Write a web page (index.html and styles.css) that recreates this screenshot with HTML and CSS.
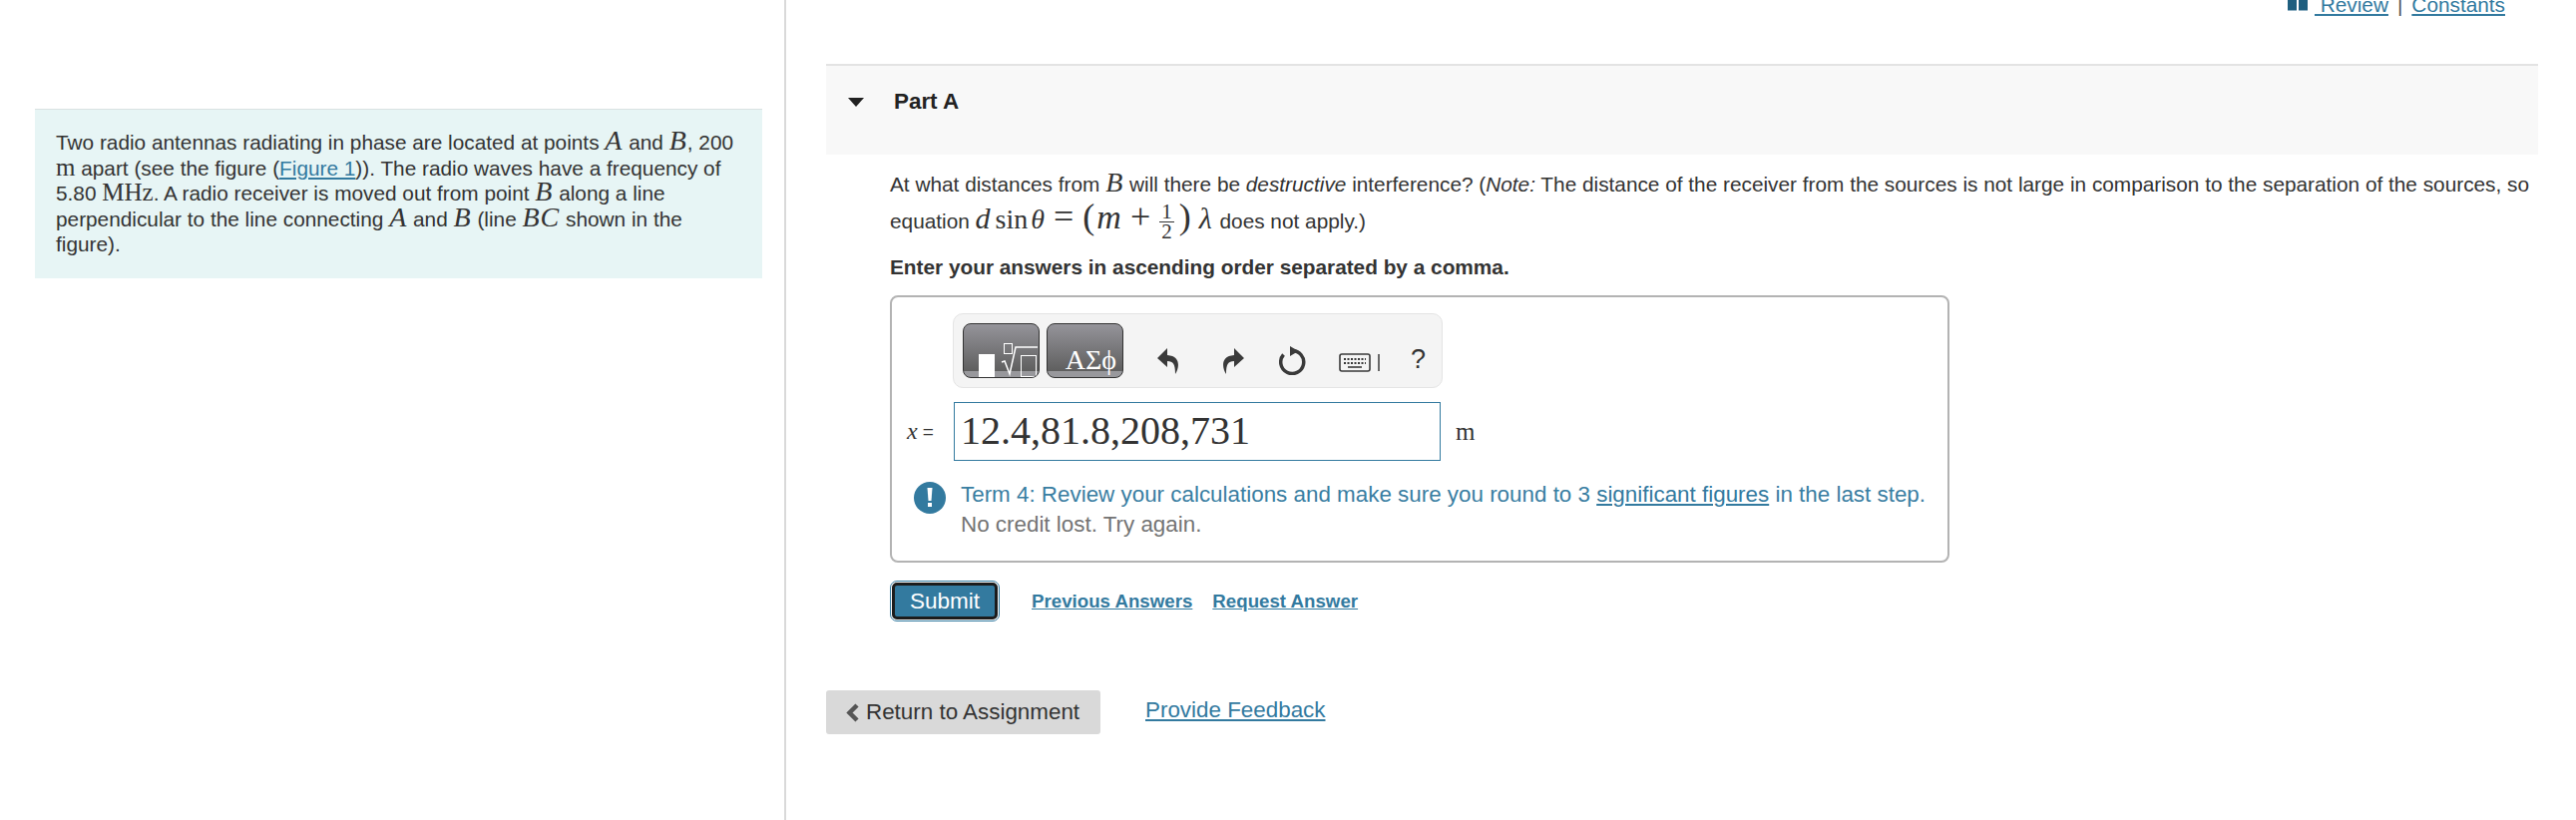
FILE: index.html
```html
<!DOCTYPE html>
<html lang="en">
<head>
  <meta charset="UTF-8">
  <title>Part A</title>
  <link rel="stylesheet" href="styles.css">
</head>
<body>
  <div class="page">
    <div class="left">
      <div class="intro">
        Two radio antennas radiating in phase are located at points <i class="math big">A</i> and <i class="math big">B</i>, 200 <span class="math unit-m">m</span> apart (see the figure (<a href="#">Figure 1</a>)). The radio waves have a frequency of 5.80 <span class="math unit-m">MHz</span>. A radio receiver is moved out from point <i class="math big">B</i> along a line perpendicular to the line connecting <i class="math big">A</i> and <i class="math big">B</i> (line <i class="math big">BC</i> shown in the figure).
      </div>
    </div>

    <div class="right">
      <div class="toplinks">
        <svg class="book" width="20" height="11" viewBox="0 0 20 11"><path d="M0 0h9v10H0zM11 0h9v10h-9z" fill="#1f5f7f"/><path d="M0 10h9v1H0zM11 10h9v1h-9z" fill="#8fb0c2"/></svg>
        <a href="#">&nbsp;Review</a>
        <span class="sep">|</span>
        <a href="#">Constants</a>
      </div>

      <div class="part-head">
        <svg class="caret" width="16" height="9" viewBox="0 0 16 9"><path d="M0 0h16L8 9z" fill="#222"/></svg>
        <span>Part A</span>
      </div>

      <div class="part-body">
        <p class="question">At what distances from <i class="math big">B</i> will there be <i>destructive</i> interference? (<i>Note:</i> The distance of the receiver from the sources is not large in comparison to the separation of the sources, so equation <span class="math eq"><i class="eq-d">d</i><span class="eq-sin">sin</span><i>θ</i><span class="eq-op">=</span><span class="eq-paren">(</span><i class="eq-m">m</i><span class="eq-op">+</span><span class="frac"><span>1</span><span>2</span></span><span class="eq-paren">)</span><i class="eq-l">λ</i></span> does not apply.)</p>
        <p class="instr">Enter your answers in ascending order separated by a comma.</p>

        <div class="answer-box">
          <div class="toolbar">
            <div class="tool-btn">
              <svg width="75" height="53" viewBox="0 0 75 53">
                <rect x="15" y="30" width="16" height="23" fill="#fff"/>
                <rect x="40.500" y="19.500" width="8" height="10" fill="none" stroke="#fff"/>
                <path d="M38 38l3-1 5 13 6-27h22" fill="none" stroke="#fff" stroke-width="1.500"/>
                <rect x="57.500" y="31.500" width="15" height="21" fill="none" stroke="#fff"/>
              </svg>
            </div>
            <div class="tool-btn greek">ΑΣϕ</div>
            <svg class="ic-undo" width="22" height="26" viewBox="0 0 22 26"><path d="M10 0L0 10l10 9v-6c6 0 8 3 8 13 4-6 6-18-8-19z" fill="#3a3a3a"/></svg>
            <svg class="ic-redo" width="22" height="26" viewBox="0 0 22 26"><path d="M12 0l10 10-10 9v-6c-6 0-8 3-8 13C0 20-2 8 12 7z" fill="#3a3a3a"/></svg>
            <svg class="ic-reload" width="27" height="29" viewBox="0 0 27 29"><path d="M4.500 8.500A11.500 11.500 0 1 0 13 4.500" fill="none" stroke="#3a3a3a" stroke-width="3.500"/><path d="M11 0l8.500 5-8.500 5z" fill="#3a3a3a"/></svg>
            <svg class="ic-kbd" width="42" height="19" viewBox="0 0 42 19">
              <rect x="1" y="1" width="30" height="17" rx="2" fill="#f4f4f4" stroke="#3a3a3a" stroke-width="1.600"/>
              <path d="M5 6h22M5 10h22" stroke="#3a3a3a" stroke-width="2" stroke-dasharray="2 1.500"/>
              <path d="M9 14h14" stroke="#3a3a3a" stroke-width="1.600"/>
              <path d="M40 1v17" stroke="#3a3a3a" stroke-width="1.500"/>
            </svg>
            <span class="help">?</span>
          </div>

          <div class="input-row">
            <span class="var"><i>x</i><span class="var-eq">=</span></span>
            <div class="answer-input">12.4,81.8,208,731</div>
            <span class="unit">m</span>
          </div>

          <div class="feedback">
            <svg class="alert" width="32" height="32" viewBox="0 0 32 32">
              <circle cx="16" cy="16" r="16" fill="#337a9f"/>
              <path d="M13.500 6h5l-1 13h-3z" fill="#fff"/>
              <rect x="14" y="21" width="4" height="4" fill="#fff"/>
            </svg>
            <div class="feedback-text">
              <div class="hint">Term 4: Review your calculations and make sure you round to 3 <a href="#">significant figures</a> in the last step.</div>
              <div class="credit">No credit lost. Try again.</div>
            </div>
          </div>
        </div>

        <div class="actions">
          <button class="submit">Submit</button>
          <a class="action-link" href="#">Previous Answers</a>
          <a class="action-link" href="#">Request Answer</a>
        </div>
      </div>

      <div class="footer-row">
        <button class="return">
          <svg width="13" height="19" viewBox="0 0 13 19"><path d="M11 2L3.500 9.500 11 17" fill="none" stroke="#555" stroke-width="4.500"/></svg>
          Return to Assignment
        </button>
        <a class="feedback-link" href="#">Provide Feedback</a>
      </div>
    </div>
  </div>
</body>
</html>
```

FILE: styles.css
```css
html, body {
  margin: 0;
  height: 100%;
  overflow: hidden;
  background: #fff;
}

body {
  font-family: "Liberation Sans", Arial, sans-serif;
  font-size: 20.800px;
  color: #333;
}

a {
  color: #337a9f;
}

.page {
  display: flex;
  height: 822px;
}

.left {
  width: 729px;
  flex: none;
  padding: 109px 22px 0 35px;
  border-right: 2px solid #d9d9d9;
}

.intro {
  box-sizing: border-box;
  height: 170px;
  padding: 21px;
  background: #e7f5f5;
  box-shadow: inset 0 1px 0 #d9e2e2;
  line-height: 25.600px;
}

.math {
  font-family: "Liberation Serif", "Times New Roman", serif;
}

.math.big {
  font-size: 28px;
  line-height: 0;
  letter-spacing: 1px;
}

.unit-m {
  font-size: 25px;
  line-height: 0;
}

.right {
  flex: 1;
  min-width: 0;
  padding: 0 38px 0 40px;
}

.toplinks {
  display: flex;
  justify-content: flex-end;
  align-items: flex-end;
  gap: 9px;
  height: 16px;
  padding-right: 33px;
  overflow: hidden;
  line-height: 22px;
}

.book {
  margin: 0 -2px 5px 0;
}

.sep {
  color: #555;
}

.part-head {
  display: flex;
  align-items: center;
  margin-top: 48px;
  height: 91px;
  box-sizing: border-box;
  padding: 0 0 17px 22px;
  background: #f8f8f8;
  border-top: 2px solid #e3e3e3;
  font-size: 22.400px;
  font-weight: bold;
  color: #222;
}

.caret {
  margin-right: 30px;
}

.part-body {
  padding-left: 64px;
}

.question {
  margin: 11px 0 0;
  height: 74px;
  line-height: 37px;
}

.eq {
  font-size: 28px;
  line-height: 0;
  white-space: nowrap;
}

.eq-d {
  font-size: 30px;
}

.eq-sin {
  margin: 0 3px 0 5px;
}

.eq-op {
  margin: 0 9px;
  font-size: 36px;
}

.eq-paren {
  font-size: 36px;
  font-weight: normal;
}

.eq-m {
  margin-left: 2px;
  font-size: 34px;
}

.eq-l {
  margin: 0 2px 0 8px;
  font-size: 30px;
}

.frac {
  display: inline-flex;
  flex-direction: column;
  align-items: center;
  vertical-align: middle;
  margin-right: 5px;
  font-size: 21px;
  line-height: 19px;
}

.frac span:first-child {
  padding: 0 2px;
  border-bottom: 1px solid #333;
}

.instr {
  margin: 15px 0 0;
  font-weight: bold;
  line-height: 26px;
}

.answer-box {
  width: 1062px;
  height: 268px;
  margin-top: 15px;
  box-sizing: border-box;
  padding: 16px 0 0 15px;
  border: 2px solid #b3b3b3;
  border-radius: 8px;
}

.toolbar {
  display: flex;
  align-items: center;
  width: 491px;
  height: 75px;
  margin-left: 46px;
  box-sizing: border-box;
  padding-left: 9px;
  background: #f4f4f4;
  border: 1px solid #e4e4e4;
  border-radius: 10px;
}

.tool-btn {
  width: 77px;
  height: 55px;
  margin-right: 7px;
  box-sizing: border-box;
  border: 1px solid #333;
  border-radius: 8px;
  background: linear-gradient(#95949a, #5f5f5f 88%, #98989c 88%);
  color: #fff;
  display: flex;
  overflow: hidden;
}

.greek {
  font-family: "Liberation Serif", serif;
  font-size: 28px;
  align-items: flex-end;
  justify-content: flex-end;
  line-height: 34px;
  padding: 0 6px 0 0;
}

.ic-undo {
  margin: 20px 43px 0 27px;
}

.ic-redo {
  margin: 20px 35px 0 0;
}

.ic-reload {
  margin: 20px 33px 0 0;
}

.ic-kbd {
  margin: 24px 30px 0 0;
}

.help {
  margin-top: 18px;
  font-size: 27px;
}

.input-row {
  display: flex;
  align-items: center;
  margin-top: 14px;
}

.var {
  display: flex;
  align-items: center;
  width: 47px;
  font-size: 19px;
  flex: none;
}

.var i {
  font-family: "Liberation Serif", serif;
  font-size: 24px;
}

.var-eq {
  margin-left: 5px;
}

.answer-input {
  width: 488px;
  height: 59px;
  box-sizing: border-box;
  border: 1px solid #337a9f;
  padding-left: 6px;
  font-family: "Liberation Serif", serif;
  font-size: 40px;
  line-height: 56px;
}

.unit {
  margin-left: 15px;
  font-family: "Liberation Serif", serif;
  font-size: 25px;
}

.feedback {
  display: flex;
  align-items: flex-start;
  gap: 15px;
  margin-left: 7px;
  padding-top: 19px;
}

.alert {
  flex: none;
  margin-top: 2px;
}

.feedback-text {
  font-size: 22.400px;
  line-height: 30px;
}

.hint {
  color: #3a7ea2;
}

.credit {
  color: #747474;
}

.actions {
  display: flex;
  align-items: center;
  margin: 20px 0 0 2px;
  gap: 20px;
}

.submit {
  width: 106px;
  height: 37px;
  margin-right: 14px;
  padding: 0;
  background: #337a9f;
  color: #fff;
  font: 22.500px "Liberation Sans", Arial, sans-serif;
  border: 3px solid #1c1c1c;
  border-radius: 5px;
  outline: 1px solid #337a9f;
  outline-offset: 1px;
}

.action-link {
  font-size: 18.700px;
  font-weight: bold;
}

.footer-row {
  display: flex;
  align-items: flex-start;
  gap: 45px;
  margin-top: 71px;
}

.return {
  display: flex;
  align-items: center;
  gap: 7px;
  width: 275px;
  height: 44px;
  padding: 0 0 0 20px;
  border: 0;
  border-radius: 3px;
  background: #d9d9d9;
  color: #333;
  font: 22.400px "Liberation Sans", Arial, sans-serif;
}

.feedback-link {
  font-size: 22.400px;
  line-height: 40px;
}
```
